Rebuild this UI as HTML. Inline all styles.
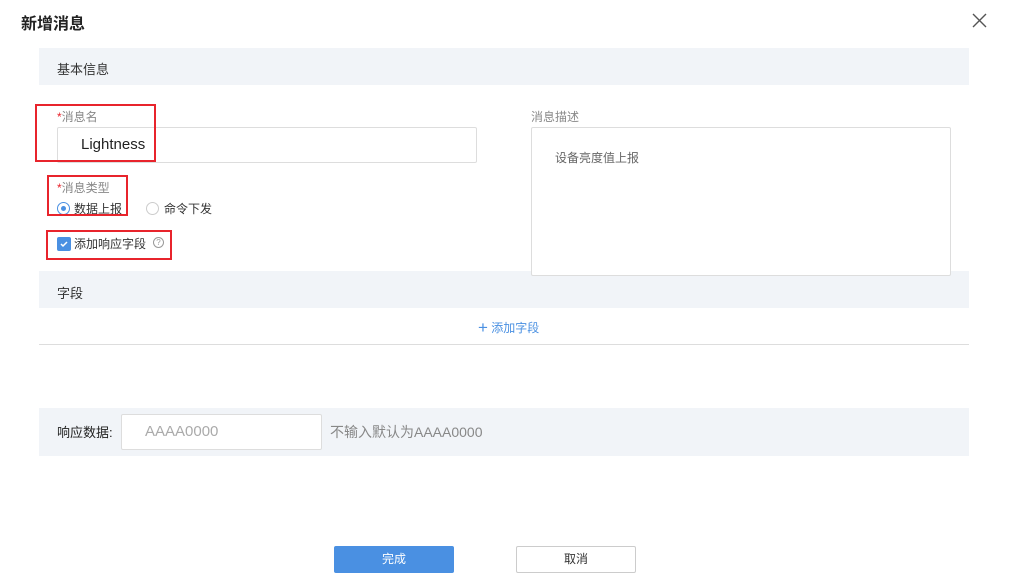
<!DOCTYPE html>
<html><head><meta charset="utf-8"><style>
*{margin:0;padding:0;box-sizing:border-box}
body{width:1009px;height:584px;background:#fff;font-family:"Liberation Sans","Noto Sans CJK SC",sans-serif;position:relative;overflow:hidden;color:#333}
.a{position:absolute}
.bar{background:#f1f4f8}
.red{border:2px solid #e8242c}
.lbl{font-size:12px;color:#888}
.lbl b{color:#e8242c;font-weight:normal}
</style></head><body>
<div class="a" style="left:21px;top:10px;font-size:16px;font-weight:bold;color:#222">新增消息</div>
<svg class="a" style="left:972px;top:13px" width="15" height="15"><path d="M1 1L14 14M14 1L1 14" stroke="#555" stroke-width="1.4"/></svg>
<div class="a bar" style="left:39px;top:48px;width:930px;height:37px"></div>
<div class="a" style="left:57px;top:59px;font-size:13px">基本信息</div>
<div class="a lbl" style="left:57px;top:108px"><b>*</b>消息名</div>
<div class="a" style="left:57px;top:127px;width:420px;height:36px;border:1px solid #ddd;border-radius:2px"></div>
<div class="a" style="left:81px;top:136px;font-size:15px;color:#222">Lightness</div>
<div class="a red" style="left:35px;top:104px;width:121px;height:58px"></div>
<div class="a lbl" style="left:57px;top:179px"><b>*</b>消息类型</div>
<div class="a" style="left:57px;top:202px;width:13px;height:13px;border:1px solid #4a90e2;border-radius:50%"><div style="margin:3px;width:5px;height:5px;background:#4a90e2;border-radius:50%"></div></div>
<div class="a" style="left:74px;top:200px;font-size:12px">数据上报</div>
<div class="a" style="left:146px;top:202px;width:13px;height:13px;border:1px solid #ccc;border-radius:50%"></div>
<div class="a" style="left:164px;top:200px;font-size:12px">命令下发</div>
<div class="a red" style="left:47px;top:175px;width:81px;height:41px"></div>
<div class="a" style="left:57px;top:237px;width:14px;height:14px;background:#4a90e2;border-radius:2px"><svg width="14" height="14"><path d="M4 7l2 2 4-4" stroke="#fff" stroke-width="1.5" fill="none"/></svg></div>
<div class="a" style="left:74px;top:235px;font-size:12px">添加响应字段</div>
<div class="a" style="left:153px;top:237px;width:11px;height:11px;border:1px solid #999;border-radius:50%;font-size:8px;color:#999;text-align:center;line-height:9px">?</div>
<div class="a red" style="left:46px;top:230px;width:126px;height:30px"></div>
<div class="a bar" style="left:39px;top:271px;width:930px;height:37px"></div>
<div class="a lbl" style="left:531px;top:108px">消息描述</div>
<div class="a" style="left:531px;top:127px;width:420px;height:149px;border:1px solid #ddd;border-radius:2px;background:#fff"></div>
<div class="a" style="left:555px;top:149px;font-size:12px;color:#666">设备亮度值上报</div>
<div class="a" style="left:57px;top:283px;font-size:13px">字段</div>
<div class="a" style="left:478px;top:318px;font-size:12px;color:#4a90e2"><span style="font-size:17px;font-weight:300;vertical-align:-1px">+</span> 添加字段</div>
<div class="a" style="left:39px;top:344px;width:930px;height:1px;background:#ddd"></div>
<div class="a bar" style="left:39px;top:408px;width:930px;height:48px"></div>
<div class="a" style="left:57px;top:422px;font-size:13px;color:#222">响应数据:</div>
<div class="a" style="left:121px;top:414px;width:201px;height:36px;background:#fff;border:1px solid #ddd;border-radius:2px"></div>
<div class="a" style="left:145px;top:423px;font-size:15px;color:#aaa">AAAA0000</div>
<div class="a" style="left:330px;top:422px;font-size:14px;color:#888">不输入默认为AAAA0000</div>
<div class="a" style="left:334px;top:546px;width:120px;height:27px;background:#4a90e2;border-radius:2px;color:#fff;font-size:12px;text-align:center;line-height:27px">完成</div>
<div class="a" style="left:516px;top:546px;width:120px;height:27px;border:1px solid #ccc;border-radius:2px;font-size:12px;text-align:center;line-height:25px">取消</div>
</body></html>
